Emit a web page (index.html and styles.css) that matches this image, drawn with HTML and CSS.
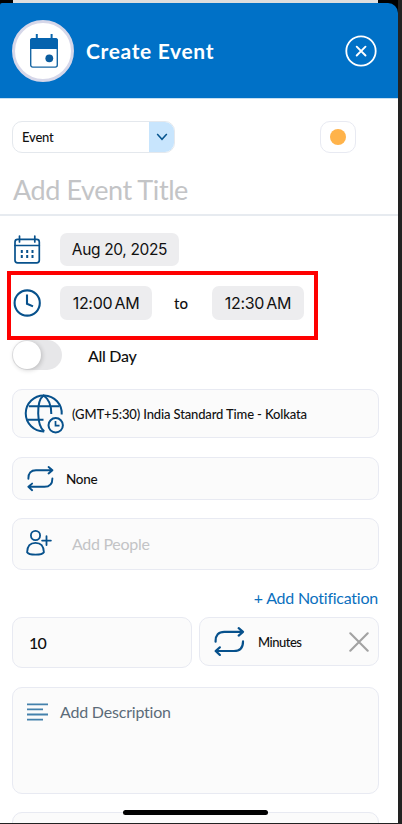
FILE: index.html
```
<!DOCTYPE html>
<html lang="en">
<head>
<meta charset="utf-8">
<title>Create Event</title>
<link rel="stylesheet" href="styles.css">
</head>
<body>
<main class="phone">
  <div class="backdrop"></div>
  <header class="header">
    <span class="avatar">
      <svg width="28" height="34" viewBox="0 0 28 34"><path d="M6.8 0v6M21.6 0v6" stroke="#0b67ad" stroke-width="2"/><rect x=".7" y="4.7" width="26.6" height="28.4" rx="2" fill="#fff" stroke="#1766a3" stroke-width="1.4"/><path d="M0 15V7a3 3 0 0 1 3-3h22a3 3 0 0 1 3 3v8z" fill="#0563ae"/><circle cx="19.3" cy="24.3" r="3.9" fill="#0b5d9f"/></svg>
    </span>
    <h1 class="heading"><span class="t-heading">Create Event</span></h1>
    <svg class="close" width="32" height="32" viewBox="0 0 32 32" fill="none" stroke="#fff"><circle cx="16" cy="16" r="14.7" stroke-width="1.8"/><path d="M11.7 11.7l8.8 8.8M20.5 11.7l-8.8 8.8" stroke-width="1.9" stroke-linecap="round"/></svg>
  </header>
  <form class="form">
    <div class="type-row">
      <div class="select"><span class="t-event">Event</span><span class="arrow"><svg width="12" height="8" viewBox="0 0 12 8" fill="none" stroke="#07558f" stroke-width="1.5"><path d="M1.2 1l4.8 5.3L10.8 1"/></svg></span></div>
      <div class="swatch"><i class="dot"></i></div>
    </div>
    <div class="title"><span class="t-title">Add Event Title</span></div>
    <div class="date-row">
      <svg width="30" height="30" viewBox="0 0 30 30" fill="none" stroke="#07518c" stroke-width="1.7"><rect x="3" y="4.4" width="24.3" height="23.4" rx="2.6"/><path d="M3 10.5h24.3M7.5 1v6M22.8 1v6" stroke-linecap="round"/><path d="M9.8 15v3M15.2 15v3M20.5 15v3M9.8 20v3M15.2 20v3M20.5 20v3" stroke-width="2"/></svg>
      <span class="pill date"><span class="t-date">Aug 20, 2025</span></span>
    </div>
    <div class="time-row">
      <svg width="30" height="30" viewBox="0 0 30 30" fill="none" stroke="#07518c" stroke-width="2.1"><circle cx="15.2" cy="15" r="12.6"/><path d="M15 6.5v9.3l6 2.6"/></svg>
      <span class="pill time"><span class="t-time">12:00 AM</span></span>
      <span class="to">to</span>
      <span class="pill time"><span class="t-time">12:30 AM</span></span>
      <div class="highlight"></div>
    </div>
    <div class="allday-row"><span class="toggle"><i class="knob"></i></span><span class="t-allday">All Day</span></div>
    <div class="field zone">
      <svg width="42" height="42" viewBox="0 0 42 42" fill="none" stroke="#07518c" stroke-width="2"><path d="M20.2 38.4A18 18 0 1 1 37.7 21.5"/><path d="M20.2 38.4C12.8 33 11.8 8 19.6 2.5c5 3.3 7.8 9.5 7.7 18.6M4.8 13.2h30.4M3.3 26.7h16.2"/><circle cx="31.7" cy="32.3" r="7.2"/><path d="M31.5 28v4.7h4" stroke-width="1.7"/></svg>
      <span class="t-zone">(GMT+5:30) India Standard Time - Kolkata</span>
    </div>
    <div class="field repeat">
      <svg width="28" height="26" viewBox="0 0 28 26" fill="none" stroke="#07518c" stroke-width="1.9" stroke-linejoin="round" stroke-linecap="round"><path d="M1.4 12.8C1.2 7 4 4.2 9 4.2h16.2M21.6 1l3.8 3.2-3.8 3.3M25.4 12.5c0 5.6-3 8.3-8 8.3H1.5M5.1 17.6l-3.7 3.2 3.7 3.4"/></svg>
      <span class="t-none">None</span>
    </div>
    <div class="field people">
      <svg width="28" height="28" viewBox="0 0 28 28" fill="none" stroke="#07518c" stroke-width="1.8"><circle cx="10.5" cy="6.5" r="4.6"/><path d="M2.1 23.2c.2-6 3.3-9.3 8.4-9.3s8.2 3.3 8.4 9.3c-1.8 3.2-15 3.2-16.8 0z"/><path d="M21.5 7.2v8.8M17.1 11.6h8.8" stroke-linecap="round"/></svg>
      <span class="t-people">Add People</span>
    </div>
    <div class="add-notification"><span class="t-notify">+ Add Notification</span></div>
    <div class="notify-row">
      <div class="field amount"><span class="t-amount">10</span></div>
      <div class="field unit">
        <svg width="32" height="30" viewBox="0 0 28 26" preserveAspectRatio="none" fill="none" stroke="#07518c" stroke-width="1.9" stroke-linejoin="round" stroke-linecap="round"><path d="M1.4 12.8C1.2 7 4 4.2 9 4.2h16.2M21.6 1l3.8 3.2-3.8 3.3M25.4 12.5c0 5.6-3 8.3-8 8.3H1.5M5.1 17.6l-3.7 3.2 3.7 3.4"/></svg>
        <span class="t-minutes">Minutes</span>
        <svg class="remove" width="20" height="20" viewBox="0 0 20 20" stroke="#a2a2a2" stroke-width="2.1" stroke-linecap="round"><path d="M1.3 1.3l17.4 17.4M18.7 1.3L1.3 18.7"/></svg>
      </div>
    </div>
    <div class="field description">
      <svg width="21" height="19" viewBox="0 0 21 19" fill="none" stroke="#4481ac" stroke-width="1.9"><path d="M0 1.4h21M0 6.4h16M0 11.5h21M0 16.6h16"/></svg>
      <span class="t-description">Add Description</span>
    </div>
    <div class="field next"></div>
  </form>
  <div class="home-bar"></div>
</main>
</body>
</html>
```
FILE: styles.css
```
* { box-sizing: border-box; }
body { margin: 0; background: #222; font-family: Lato, "Liberation Sans", sans-serif; color: #111; }
svg { display: block; flex: none; }
span { white-space: nowrap; }
.phone { position: relative; width: 398px; height: 823px; overflow: hidden; background: #fff; }
.phone::before { content: ""; position: absolute; top: 0; left: 0; width: 398px; height: 16px; background: #000; }
.backdrop { position: relative; height: 3px; margin: 0 20px 0 13px; background: #dedede; }
.header { position: relative; display: flex; align-items: center; height: 96px; padding: 0 21px 0 12px; background: #0071c7; border-bottom: 1px solid #c5dff2; border-radius: 2px 10px 0 0; }
.avatar { display: flex; align-items: center; justify-content: center; width: 62px; height: 62px; border: 3px solid #d6d7e9; border-radius: 50%; background: #fff; }
.avatar svg { margin-left: 1px; }
.heading { flex: 1; margin: 0 0 0 12px; font-size: 21px; line-height: 26px; color: #fff; }
.form { display: flex; flex-direction: column; padding: 22px 19px 0 12px; }
.type-row { display: flex; justify-content: space-between; height: 32px; padding-right: 23px; }
.select { display: flex; align-items: center; justify-content: space-between; width: 163px; padding-left: 9px; overflow: hidden; border: 1px solid #e4e8ed; border-radius: 10px; }
.arrow { display: flex; align-items: center; justify-content: center; width: 25px; height: 32px; background: #c8e5fd; }
.swatch { display: flex; align-items: center; justify-content: center; width: 36px; border: 1px solid #e8eaf2; border-radius: 10px; }
.dot { width: 16px; height: 16px; border-radius: 50%; background: #ffb34a; }
.title { height: 63px; margin: 0 -19px 0 -12px; padding: 20px 0 0 13px; border-bottom: 2px solid #e7ebf0; line-height: 34px; }
.date-row, .time-row { position: relative; display: flex; align-items: center; }
.date-row { height: 33px; margin-top: 17px; }
.time-row { height: 34px; margin-top: 20px; }
.pill { display: flex; align-items: center; justify-content: center; height: 100%; margin-left: 18px; border-radius: 7px; background: #ededef; font-family: Inter, sans-serif; font-size: 16px; }
.date { width: 119px; padding-bottom: 1px; }
.time { width: 92px; }
.to { width: 60px; padding-right: 2px; text-align: center; font-size: 15px; font-weight: 500; }
.to + .pill { margin-left: 0; }
.highlight { position: absolute; left: -5px; top: -15px; width: 311px; height: 69px; border: 4px solid #fe0000; }
.allday-row { display: flex; align-items: center; gap: 26px; height: 30px; margin-top: 20px; }
.toggle { width: 50px; height: 30px; padding: 1px; border-radius: 15px; background: #e7e7e9; }
.knob { display: block; width: 28px; height: 28px; border-radius: 50%; background: #fff; box-shadow: 1px 1px 5px #0003; }
.field { display: flex; align-items: center; border: 1px solid #e8eaf2; border-radius: 10px; background: #fbfbfb; }
.zone { height: 49px; margin-top: 19px; padding-left: 11px; gap: 6px; }
.repeat { height: 43px; margin-top: 19px; padding-left: 14px; gap: 11px; }
.people { height: 52px; margin-top: 18px; padding: 0 0 2px 12px; gap: 19px; }
.add-notification { height: 20px; margin-top: 18px; padding-right: 1px; line-height: 20px; text-align: right; color: #0b70be; }
.notify-row { display: flex; align-items: flex-start; gap: 7px; margin-top: 9px; }
.amount { width: 180px; height: 51px; padding-left: 16px; }
.unit { width: 180px; height: 49px; padding: 0 9px 0 14px; gap: 12px; }
.remove { margin-left: auto; }
.description { align-items: flex-start; height: 107px; margin-top: 19px; padding: 14px 14px; gap: 12px; line-height: 20px; }
.description svg { margin-top: 1px; }
.next { height: 50px; margin-top: 18px; flex: none; }
.home-bar { position: absolute; left: 123px; top: 810px; width: 145px; height: 5px; border-radius: 3px; background: #000; }
.t-heading { font-size: 21px; letter-spacing: .65px; }
.t-event { font-size: 13px; font-weight: 500; letter-spacing: -.2px; }
.t-title { font-size: 27px; color: #c3c4c6; letter-spacing: -.42px; }
.t-date { font-size: 15.5px; letter-spacing: -.35px; }
.t-time { font-size: 16px; letter-spacing: -.3px; word-spacing: -2px; }
.t-allday { font-size: 16px; font-weight: 500; letter-spacing: -.3px; }
.t-zone { font-size: 13px; font-weight: 500; letter-spacing: -.14px; }
.t-none { font-size: 13.5px; font-weight: 500; letter-spacing: -.3px; }
.t-people { font-size: 16px; color: #c3c4c6; letter-spacing: -.3px; }
.t-notify { font-size: 16px; letter-spacing: -.24px; }
.t-amount { font-size: 16px; font-weight: 500; letter-spacing: -.8px; }
.t-minutes { font-size: 13px; font-weight: 500; letter-spacing: -.5px; }
.t-description { font-size: 16px; color: #5b6b79; letter-spacing: -.2px; }
```
